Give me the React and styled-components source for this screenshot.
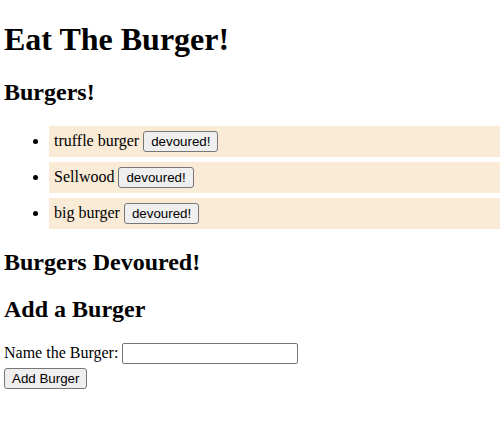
import styled, { createGlobalStyle } from "styled-components";

const GlobalStyle = createGlobalStyle`
  body {
    margin: 0 0 8px 4px;
    font-family: "Liberation Serif", "Times New Roman", serif;
    font-size: 16px;
    color: #000;
    background: #fff;
  }
`;

const Title = styled.h1`
  font-size: 32px;
  font-weight: bold;
  margin: 21px 0 21.44px;
`;

const Heading = styled.h2`
  font-size: 24px;
  font-weight: bold;
  margin: 19.92px 0;
`;

const BurgerList = styled.ul`
  margin: 16px -5px 16px 0;
  padding-left: 40px;
  list-style: disc;
`;

const BurgerItem = styled.li`
  background: antiquewhite;
  margin: 5px;
  padding: 5px;
`;

const Button = styled.button`
  font-family: "Liberation Sans", Arial, sans-serif;
  font-size: 13.33px;
  color: #000;
  background: #efefef;
  border: 1px solid #767676;
  border-radius: 3px;
  padding: 1px 7px;
  margin: ${(p) => (p.$inline ? "0 0 0 4px" : "4px 0 0")};
  height: 21px;
  vertical-align: baseline;
`;

const Form = styled.form`
  margin: 0;
`;

const Label = styled.label`
  margin-right: 4px;
`;

const TextInput = styled.input`
  font-family: "Liberation Sans", Arial, sans-serif;
  font-size: 13.33px;
  width: 176px;
  height: 21px;
  box-sizing: border-box;
  border: 1px solid #767676;
  border-radius: 2px;
  padding: 1px 2px;
`;

const burgers = ["truffle burger", "Sellwood", "big burger"];

export default function App() {
  return (
    <>
      <GlobalStyle />
      <Title>Eat The Burger!</Title>
      <Heading>Burgers!</Heading>
      <BurgerList>
        {burgers.map((name) => (
          <BurgerItem key={name}>
            {name}
            <Button $inline type="button">
              devoured!
            </Button>
          </BurgerItem>
        ))}
      </BurgerList>
      <Heading>Burgers Devoured!</Heading>
      <Heading>Add a Burger</Heading>
      <Form onSubmit={(e) => e.preventDefault()}>
        <Label htmlFor="burger">Name the Burger:</Label>
        <TextInput id="burger" type="text" />
        <br />
        <Button type="submit">Add Burger</Button>
      </Form>
    </>
  );
}
